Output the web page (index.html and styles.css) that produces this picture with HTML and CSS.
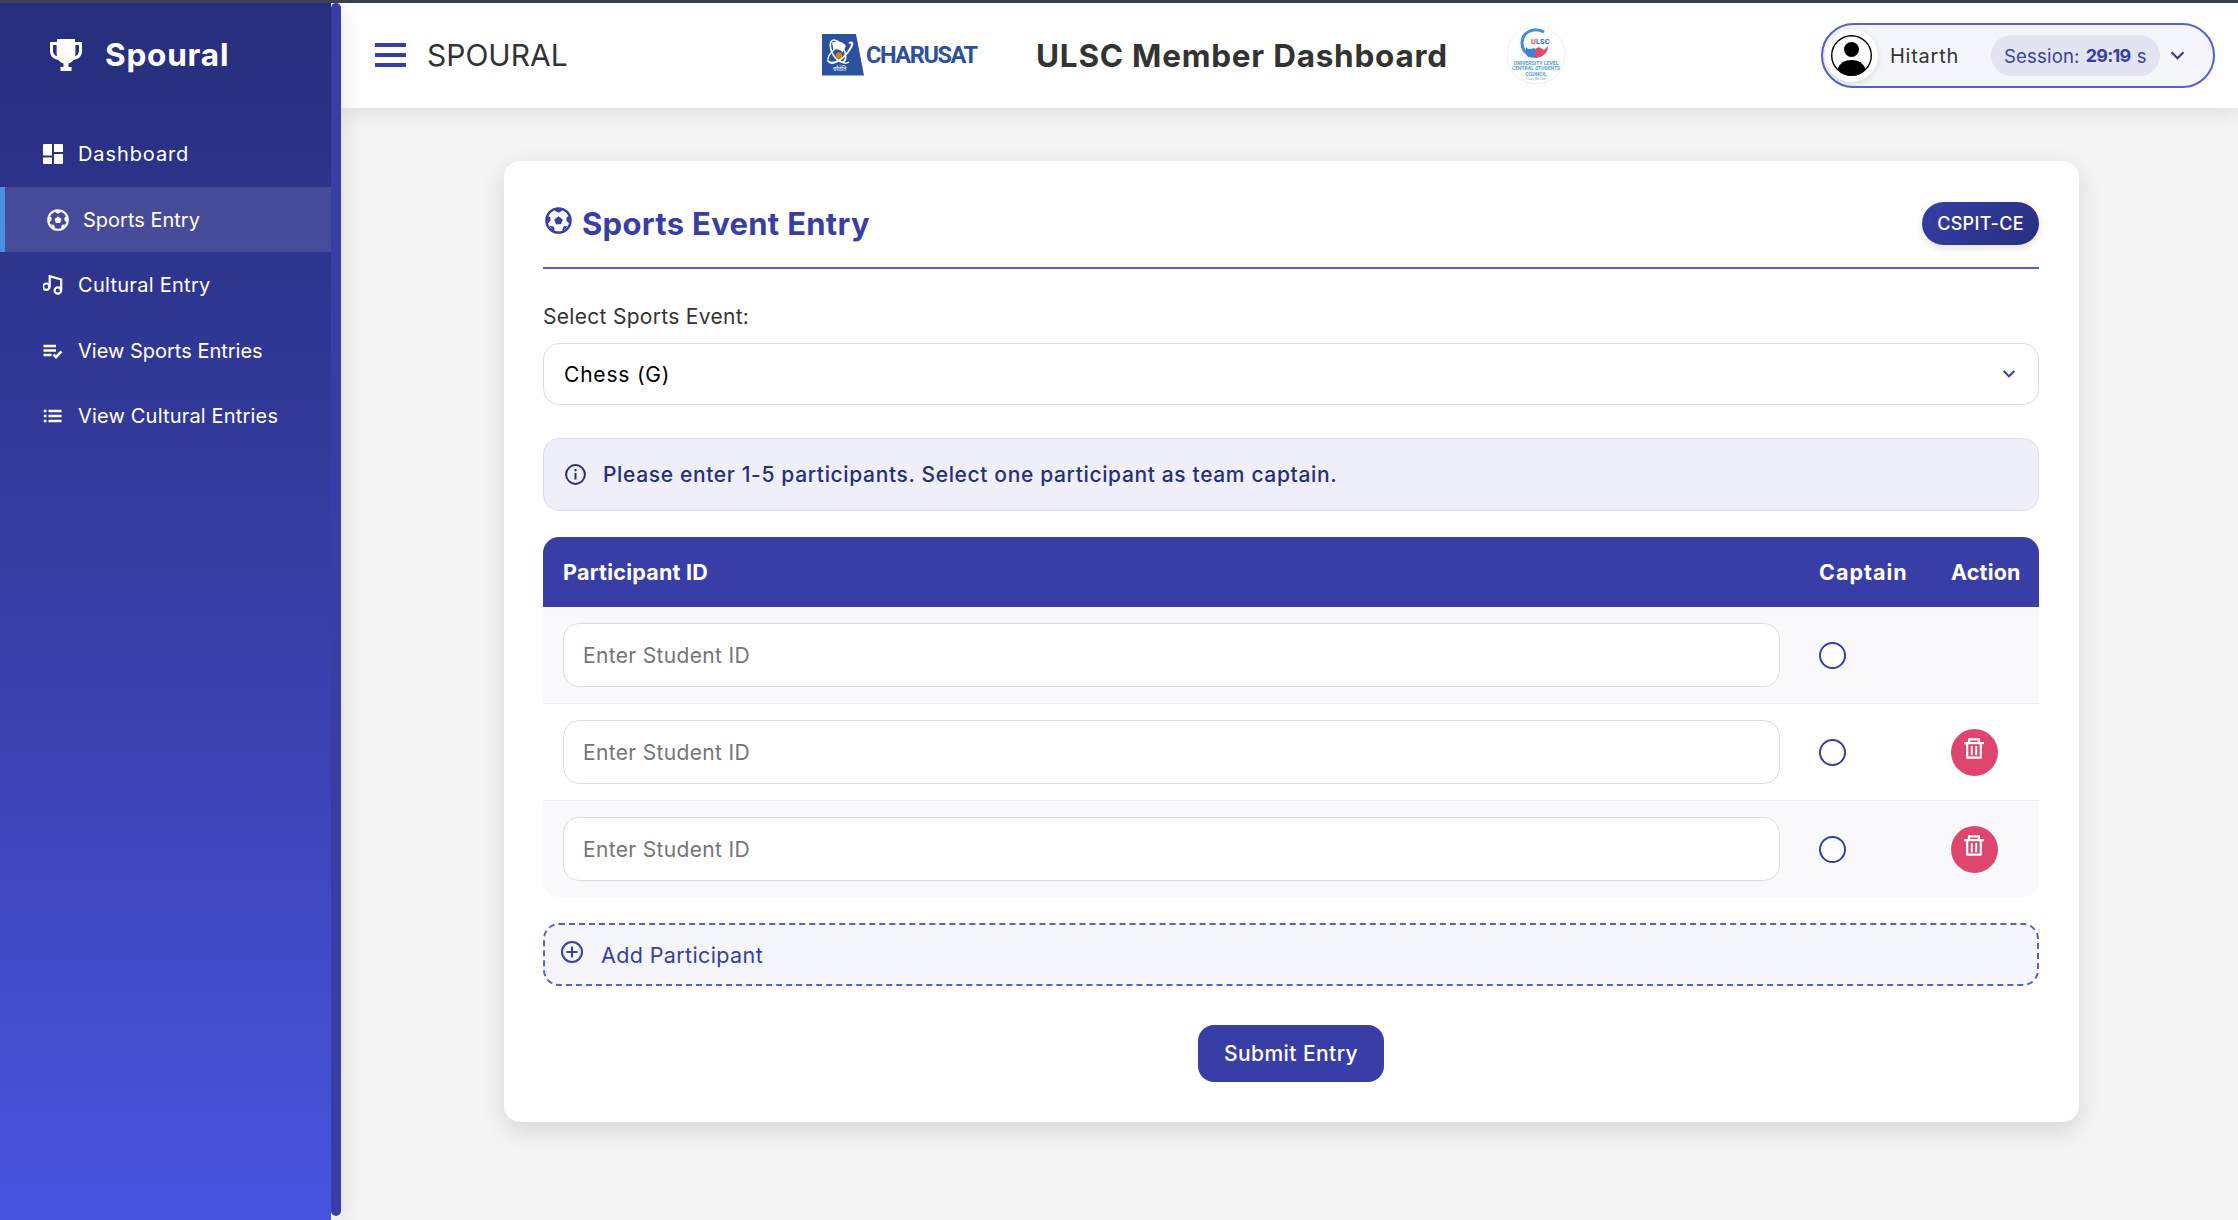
FILE: index.html
```html
<!DOCTYPE html>
<html lang="en">
<head>
<meta charset="utf-8">
<title>Spoural - Sports Event Entry</title>
<link rel="stylesheet" href="styles.css">
</head>
<body>
<svg class="defs" width="0" height="0" aria-hidden="true">
  <symbol id="football" viewBox="0 0 24 24">
    <circle cx="12" cy="12" r="10.700" fill="none" stroke="currentColor" stroke-width="2.200"/>
    <path fill="currentColor" d="M12 8.200l3.800 2.800-1.500 4.300H9.700L8.200 11z"/>
    <path fill="currentColor" d="M9 2h6v1.500L12 5.200 9 3.500zM22 8v6.500l-1.300-.5-1.700-2 .3-3.200zM2 8v6.500l1.300-.5L5 12l-.3-3.200zM4 16.800l3.400.4 1.300 3.200-1.200 1zM20 16.800l-3.400.4-1.300 3.200 1.200 1z"/>
  </symbol>
  <symbol id="trash" viewBox="0 0 20 21">
    <g fill="none" stroke="currentColor" stroke-width="2.200" stroke-linejoin="round">
      <path d="M0 5.200h20M5 5V1.300h10V5M3.200 5v14.700h13.600V5"/>
      <path d="M7.800 8v9.200M12.200 8v9.200" stroke-width="2"/>
    </g>
  </symbol>
  <symbol id="chevron" viewBox="0 0 14 9">
    <path d="M1 1.200l6 6 6-6" fill="none" stroke="currentColor" stroke-width="2.300"/>
  </symbol>
</svg>
<div class="app">
  <aside class="sidebar">
    <div class="menu">
      <div class="brand">
        <svg class="brand-icon" viewBox="0 0 32 32">
          <path fill="#fff" d="M7 0h18v3h7v9c0 5-3.500 8.500-8.500 8.900-1.300 1.800-3 2.900-5 3.500V28H21.500v4h-11v-4h3v-3.600c-2-.6-3.700-1.700-5-3.500C3.500 20.500 0 17 0 12V3h7z"/>
          <path fill="#28307f" d="M3 6h3.600v8c0 1.200.2 2.300.6 3.400C4.600 16.600 3 14.600 3 12zM29 6h-3.600v8c0 1.200-.2 2.300-.6 3.400 2.600-.8 4.200-2.800 4.200-5.400z"/>
        </svg>
        <span class="brand-name">Spoural</span>
      </div>
      <nav class="nav">
        <a class="item t-dash"><svg class="ico" viewBox="0 0 20 20"><path fill="#fff" d="M1 0h8v11.500H0V1a1 1 0 0 1 1-1zM11 0h8a1 1 0 0 1 1 1v7h-9zM0 13.500h9V20H1a1 1 0 0 1-1-1zM11 10h9v9a1 1 0 0 1-1 1h-8z"/></svg><span>Dashboard</span></a>
        <a class="item active"><svg class="ico ball"><use href="#football"/></svg><span>Sports Entry</span></a>
        <a class="item t-cult"><svg class="ico" viewBox="0 0 20 20"><g fill="none" stroke="#fff" stroke-width="2.200"><circle cx="3.300" cy="11.700" r="3.200"/><circle cx="14.800" cy="15.500" r="3.200"/><path d="M6.700 12V1.200L18.200 4.500v11"/></g></svg><span>Cultural Entry</span></a>
        <a class="item t-low"><svg class="ico" viewBox="0 0 20 20"><path d="M.5 5H13M.5 9.500H13M.5 14h8M10.500 13.500l2.500 2.600 5.500-5.800" fill="none" stroke="#fff" stroke-width="2.600"/></svg><span>View Sports Entries</span></a>
        <a class="item t-view"><svg class="ico" viewBox="0 0 20 20"><path d="M.8 5h2.600M.8 10h2.600M.8 15h2.600M5.500 5h13M5.500 10h13M5.500 15h13" fill="none" stroke="#fff" stroke-width="2.600"/></svg><span>View Cultural Entries</span></a>
      </nav>
    </div>
    <div class="scrollbar"><div class="thumb"></div></div>
  </aside>
  <div class="page">
    <header class="topbar">
      <div class="left">
        <div class="burger"><i></i><i></i><i></i></div>
        <span class="site">SPOURAL</span>
      </div>
      <div class="center">
        <div class="charusat">
          <svg width="42" height="42" viewBox="0 0 42 42">
            <path fill="#2a529f" d="M0 0h34l8 41.500H0z"/>
            <g fill="none" stroke="#fff">
              <ellipse cx="16" cy="17" rx="6" ry="12" stroke-width="1.600" transform="rotate(-28 16 17)"/>
              <path stroke-width="2" d="M6 27c4 5 14-1 20-9 5-7 6-11 1-9"/>
              <path stroke-width="1.300" d="M6 27c-1-4 3-9 8-13M17 26c3 3 7 4 10 2"/>
            </g>
            <path fill="#fff" d="M10 8.500c5-2 11-1 14 3.500l-3.500 6.500c-2-3-6-4-9-2.500z"/>
            <circle cx="17" cy="21.500" r="3.200" fill="#d9811f"/>
            <text class="motto" x="11" y="37">चरैवेति</text>
          </svg>
          <span class="cname">CHARUSAT</span>
        </div>
        <span class="title">ULSC Member Dashboard</span>
        <svg class="ulsc" width="60" height="60" viewBox="0 0 60 60">
          <circle cx="30" cy="30" r="29" fill="#fff" stroke="#f1f1f1"/>
          <path d="M38 7C27 1 16 8 16 18c0 6 3 10 8 12" fill="none" stroke="#3e8ee0" stroke-width="3"/>
          <path d="M20 22c2 3 5 2 8 1l4 4-2 6-8-1c-2-2-3-6-2-10z" fill="#3e7fd6"/>
          <path d="M42 21c0 6-4 11-12 12l-2-3 3-3-2-3 4-2 5 3z" fill="#e8476b"/>
          <text class="u-abbr" x="25" y="19" fill="#2f6fc4"><tspan fill="#e8476b">U</tspan>LSC</text>
          <g class="u-text">
            <text x="30" y="39.500" textLength="45" lengthAdjust="spacingAndGlyphs">UNIVERSITY LEVEL</text>
            <text x="30" y="45" textLength="48" lengthAdjust="spacingAndGlyphs">CENTRAL STUDENTS</text>
            <text x="30" y="50.500" textLength="21" lengthAdjust="spacingAndGlyphs">COUNCIL</text>
          </g>
          <text class="u-sub" x="30" y="55">I Can, We Can</text>
        </svg>
      </div>
      <div class="user">
        <span class="avatar"><svg width="41" height="41" viewBox="0 0 41 41"><circle cx="20.500" cy="20.500" r="19.800" fill="#fff" stroke="#000" stroke-width="1.400"/><circle cx="20.500" cy="14.500" r="7.500"/><path d="M6.300 34.500C8.500 28 14 25 20.500 25s12 3 14.200 9.500A20 20 0 0 1 6.300 34.500z"/></svg></span>
        <span class="uname">Hitarth</span>
        <span class="session"><span>Session:</span><b>29:19</b><span>s</span></span>
        <svg class="chev"><use href="#chevron"/></svg>
      </div>
    </header>
    <main class="main">
      <section class="card">
        <div class="card-head">
          <h1><svg class="h-ball"><use href="#football"/></svg>Sports Event Entry</h1>
          <span class="badge">CSPIT-CE</span>
        </div>
        <div class="label">Select Sports Event:</div>
        <div class="select"><span>Chess (G)</span><svg class="chev thin"><use href="#chevron"/></svg></div>
        <div class="info"><svg width="21" height="21" viewBox="0 0 21 21"><circle cx="10.500" cy="10.500" r="9.400" fill="none" stroke="currentColor" stroke-width="2"/><path d="M10.500 5v2.200M10.500 9v6.500" stroke="currentColor" stroke-width="2"/></svg><span>Please enter 1-5 participants. Select one participant as team captain.</span></div>
        <div class="table">
          <div class="row head"><span class="c-id">Participant ID</span><span class="c-cap">Captain</span><span class="c-act">Action</span></div>
          <div class="row"><input type="text" placeholder="Enter Student ID"><span class="radio"></span></div>
          <div class="row"><input type="text" placeholder="Enter Student ID"><span class="radio"></span><button class="del"><svg><use href="#trash"/></svg></button></div>
          <div class="row"><input type="text" placeholder="Enter Student ID"><span class="radio"></span><button class="del"><svg><use href="#trash"/></svg></button></div>
        </div>
        <div class="add"><svg width="22" height="22" viewBox="0 0 22 22"><path d="M11 5.500v11M5.500 11h11" stroke="currentColor" stroke-width="2"/><circle cx="11" cy="11" r="10" fill="none" stroke="currentColor" stroke-width="2"/></svg><span>Add Participant</span></div>
        <button class="submit">Submit Entry</button>
      </section>
    </main>
  </div>
</div>
</body>
</html>
```
FILE: styles.css
```css
* { box-sizing: border-box; }
body {
  margin: 0;
  height: 1220px;
  overflow: hidden;
  background: #f4f4f4;
  font-family: Inter, "Open Sans", sans-serif;
  color: #333;
  border-top: 3px solid #3a4050;
}
.defs { position: absolute; }
svg { display: block; flex: none; }
button { font-family: inherit; border: 0; }

.app { display: flex; height: 1217px; }

/* Sidebar */
.sidebar { display: flex; flex: none; width: 341px; position: relative; z-index: 2; box-shadow: 2px 0 20px rgba(0, 0, 0, .1); background: #f4f4f4; }
.menu { width: 331px; background: linear-gradient(180deg, #272e7c 0%, #383ea6 50%, #4855e0 100%); }
.scrollbar { width: 10px; padding-bottom: 4px; background: #f1f1f1; }
.thumb { height: 100%; border-radius: 5px; background: #383ea6; }
.brand { display: flex; align-items: center; gap: 23px; height: 103px; padding-left: 50px; color: #fff; }
.brand-icon { width: 32px; height: 32px; }
.brand-name { font-size: 31.500px; font-weight: 700; letter-spacing: .8px; }
.nav { padding-top: 15.600px; }
.item { display: flex; align-items: center; gap: 15px; height: 65.400px; padding-left: 43px; color: #fff; font-size: 20px; white-space: nowrap; }
.item.active { padding-left: 42px; border-left: 5px solid #4a90e2; background: rgba(255, 255, 255, .12); gap: 14px; }
.item .ico { width: 20px; height: 20px; }
.item .ico.ball { width: 22px; height: 22px; }
.t-dash { letter-spacing: .9px; }
.t-cult { letter-spacing: .28px; }
.t-low { padding-top: 1px; }
.t-view { letter-spacing: .18px; }

/* Header */
.page { flex: 1; display: flex; flex-direction: column; min-width: 0; }
.topbar { display: flex; align-items: center; height: 105px; flex: none; padding: 0 23px 0 34px; background: #fff; box-shadow: 0 4px 20px rgba(0, 0, 0, .1); position: relative; }
.left { display: flex; align-items: center; gap: 21px; width: 447px; padding-bottom: 2px; }
.burger { display: flex; flex-direction: column; gap: 6px; width: 31px; }
.burger i { height: 4px; background: #383ea6; }
.site { font-size: 30px; }
.center { display: flex; align-items: center; padding-bottom: 1px; }
.charusat { display: flex; align-items: center; gap: 2px; width: 214px; }
.title { width: 470px; font-size: 31.500px; font-weight: 700; letter-spacing: .76px; white-space: nowrap; }
.cname { font: 700 23.500px Roboto, sans-serif; letter-spacing: -1.400px; color: #2a529f; }
.motto { font: 5.500px "Noto Sans", sans-serif; fill: #fff; }
.u-abbr { font: 700 7.500px Roboto, sans-serif; }
.u-text { font: 700 4.600px Roboto, sans-serif; fill: #4fa0dc; text-anchor: middle; }
.u-sub { font: 3.200px Roboto, sans-serif; fill: #999; text-anchor: middle; }
.user { display: flex; align-items: center; width: 394px; height: 65px; margin-left: auto; padding-left: 2px; border: 2px solid #545fd9; border-radius: 33px; background: #f5f6fb; }
.avatar { display: flex; align-items: center; justify-content: center; width: 53px; height: 53px; border-radius: 50%; background: #fff; box-shadow: 0 2px 6px rgba(0, 0, 0, .12); }
.uname { width: 101px; margin-left: 12px; font-size: 20px; letter-spacing: .75px; }
.session { display: flex; align-items: center; gap: 6px; width: 169px; height: 41px; padding-left: 13px; border-radius: 21px; background: #e2e4f1; color: #383ea6; font-size: 18.500px; letter-spacing: .2px; }
.session b { font-size: 18px; letter-spacing: -.7px; }
.chev { width: 15px; height: 9px; margin-left: 10px; color: #383ea6; }

/* Card */
.main { padding: 53px 159px 0 163px; }
.card { height: 961px; padding: 41px 40px 0 39px; border-radius: 16px; background: #fff; box-shadow: 0 8px 24px rgba(0, 0, 0, .13); }
.card-head { display: flex; align-items: flex-start; justify-content: space-between; height: 67px; border-bottom: 2px solid #545fd9; }
h1 { display: flex; align-items: center; gap: 10px; height: 42px; margin: 0; color: #383ea6; font-size: 31px; font-weight: 650; letter-spacing: .3px; }
.h-ball { width: 27px; height: 27px; margin: -6px 0 0 2px; }
.badge { width: 117px; height: 43px; border-radius: 22px; line-height: 43px; text-align: center; color: #fff; background: linear-gradient(135deg, #383ea6, #272e7c); font-size: 18px; font-weight: 550; letter-spacing: .3px; box-shadow: 0 3px 8px rgba(0, 0, 0, .12); }
.label { height: 74px; padding-top: 35px; line-height: 26px; font-size: 21px; letter-spacing: .3px; }
.select { display: flex; align-items: center; justify-content: space-between; height: 62px; padding: 0 22px 0 20px; border: 1px solid #ddd; border-radius: 16px; color: #000; font-size: 21px; letter-spacing: .8px; }
.chev.thin { width: 14px; height: 8px; margin: 0; }
.info { display: flex; align-items: center; gap: 17px; height: 73px; margin-top: 33px; padding-left: 21px; border: 1px solid #dcdcf0; border-radius: 16px; background: #efeff9; color: #272e7c; font-size: 21px; font-weight: 500; letter-spacing: .64px; }

/* Participants */
.table { margin-top: 26px; border-radius: 16px; overflow: hidden; }
.row { display: grid; grid-template-columns: 1217px 27px 47px; column-gap: 39px; align-items: center; height: 97px; padding-left: 20px; border-bottom: 1px solid #ebebee; }
.row > :nth-child(3) { margin-left: 66px; }
.row:nth-child(even) { background: #f9f9fc; }
.row:last-child { height: 96px; border-bottom: 0; }
.row.head { height: 70px; border: 0; background: #383ea6; color: #fff; font-size: 21.500px; font-weight: 650; }
.c-id { letter-spacing: .25px; }
.c-cap { letter-spacing: 1px; }
.c-act { letter-spacing: .2px; }
input { height: 64px; padding: 0 19px; border: 1px solid #ddd; border-radius: 16px; background: #fff; font: 21px Inter, sans-serif; letter-spacing: .33px; }
input::placeholder { color: #757575; }
.radio { width: 27px; height: 27px; border: 2px solid #383ea6; border-radius: 50%; background: #fff; }
.del { display: flex; justify-content: center; width: 47px; height: 47px; padding: 9px 1px 0 0; border-radius: 50%; background: #df466f; color: #fff; }
.del svg { width: 20px; height: 21px; }
.add { display: flex; align-items: center; gap: 18px; height: 63px; margin-top: 26px; padding-left: 16px; border: 2px dashed #545fd9; border-radius: 16px; background: #f5f5fc; color: #383ea6; font-size: 21.500px; letter-spacing: .38px; }
.add svg { margin-top: -6px; }
.submit { display: block; width: 186px; height: 57px; margin: 39px auto 0; padding: 0; border-radius: 16px; background: #383ea6; color: #fff; font-size: 21px; font-weight: 500; letter-spacing: .45px; }
```
